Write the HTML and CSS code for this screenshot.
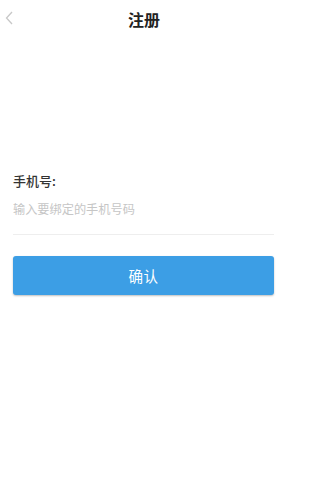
FILE: index.html
```html
<!DOCTYPE html>
<html lang="zh">
<head>
<meta charset="utf-8">
<title>注册</title>
<link rel="stylesheet" href="styles.css">
</head>
<body>
<header class="nav">
  <span class="back">
    <svg width="8" height="14" viewBox="0 0 8 14"><path d="M7 1 L1.5 7 L7 13" fill="none" stroke="#c8c8c8" stroke-width="1.3"/></svg>
  </span>
  <h1 class="title">注册</h1>
</header>
<main class="form">
  <label class="label" for="phone">手机号:</label>
  <div class="field">
    <input id="phone" class="input" type="tel" placeholder="输入要绑定的手机号码">
  </div>
  <button class="btn" type="button">确认</button>
</main>
</body>
</html>
```
FILE: styles.css
```css
* { box-sizing: border-box; }
html, body { margin: 0; padding: 0; background: #fff; }
body {
  font-family: "Noto Sans CJK SC", "Noto Sans", sans-serif;
  width: 281px;
  height: 500px;
}
.nav {
  position: relative;
  height: 37px;
  display: flex;
  align-items: center;
  justify-content: center;
}
.back {
  position: absolute;
  left: 5px;
  top: 11px;
  display: flex;
}
.title {
  margin: 0 0 0 7px;
  font-size: 16px;
  font-weight: 700;
  color: #222;
  line-height: 20px;
}
.form {
  padding: 135px 7px 0 13px;
  display: flex;
  flex-direction: column;
}
.label {
  font-size: 13px;
  line-height: 18px;
  color: #333;
  font-weight: 500;
}
.field {
  padding: 10px 0 16px;
  border-bottom: 1px solid #eeeeee;
}
.input {
  display: block;
  width: 100%;
  height: 18px;
  border: 0;
  padding: 0;
  margin: 0;
  outline: none;
  font: inherit;
  font-size: 12.2px;
  line-height: 18px;
  color: #333;
  background: transparent;
}
.input::placeholder { color: #c6c6c6; }
.btn {
  margin-top: 21px;
  height: 39px;
  border: 0;
  border-radius: 3px;
  background: #3c9ee5;
  box-shadow: 0 1px 2px rgba(0,0,0,0.25);
  color: #fff;
  font: inherit;
  font-size: 14.5px;
  letter-spacing: 0.5px;
}
```
